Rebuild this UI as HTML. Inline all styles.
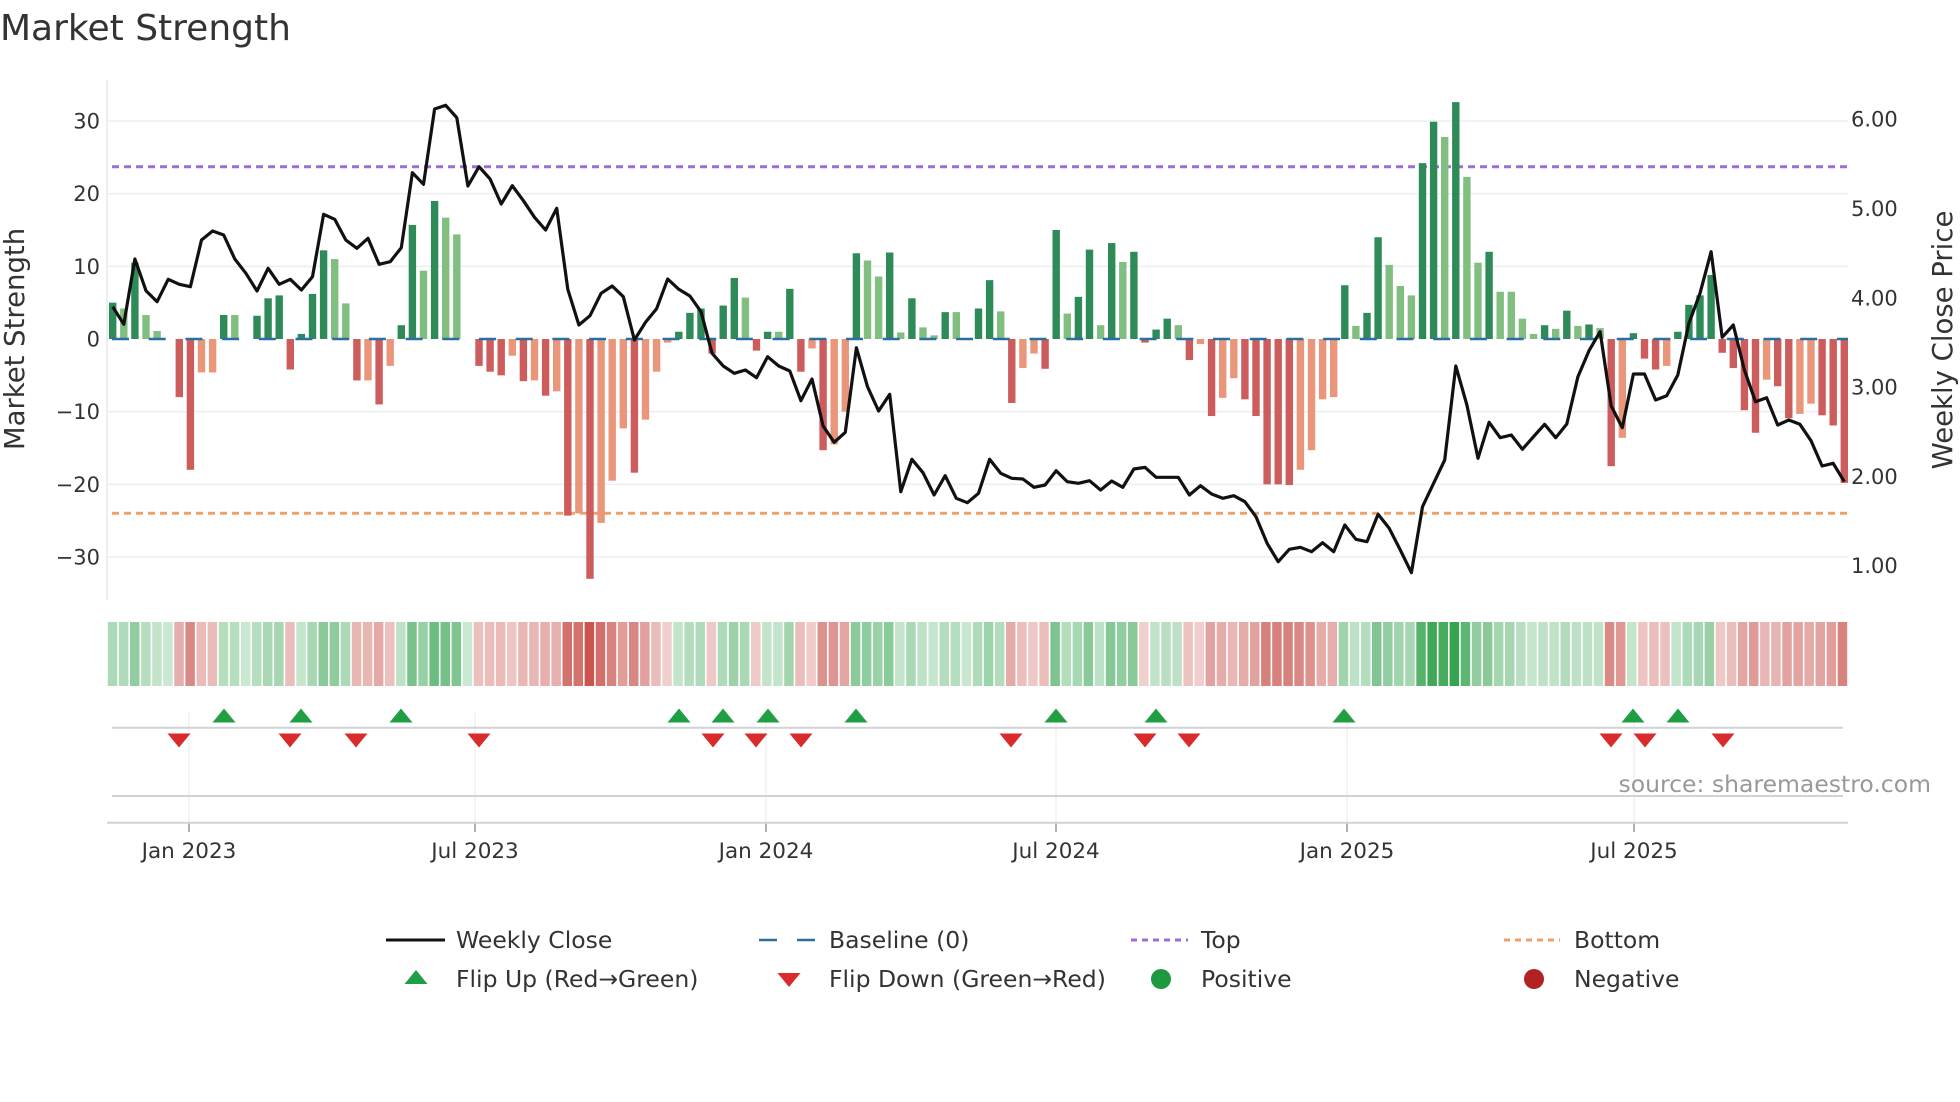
<!DOCTYPE html>
<html><head><meta charset="utf-8">
<style>
html,body{margin:0;padding:0;background:#fff;width:1960px;height:1102px;overflow:hidden}
svg text{font-family:"DejaVu Sans","Liberation Sans",sans-serif;fill:#333}
</style></head>
<body>
<svg id="c" width="1960" height="1102" viewBox="0 0 1960 1102" xmlns="http://www.w3.org/2000/svg"></svg>
<script>
(function(){
var B=[[5,'d'],[4.2,'l'],[10.5,'d'],[3.3,'l'],[1.1,'l'],[0,'l'],[-8,'d'],[-18,'d'],[-4.6,'l'],[-4.6,'l'],[3.3,'d'],[3.3,'l'],[0,'l'],[3.2,'d'],[5.6,'d'],[6,'d'],[-4.2,'d'],[0.7,'d'],[6.2,'d'],[12.2,'d'],[11,'l'],[4.9,'l'],[-5.7,'d'],[-5.7,'l'],[-9,'d'],[-3.7,'l'],[1.9,'d'],[15.7,'d'],[9.4,'l'],[19,'d'],[16.7,'l'],[14.4,'l'],[0,'l'],[-3.7,'d'],[-4.5,'d'],[-5,'d'],[-2.3,'l'],[-5.8,'d'],[-5.7,'l'],[-7.8,'d'],[-7.2,'l'],[-24.3,'d'],[-24,'l'],
[-33,'d'],[-25.3,'l'],[-19.5,'l'],[-12.3,'l'],[-18.4,'d'],[-11.1,'l'],[-4.5,'l'],[-0.5,'l'],[1,'d'],[3.6,'d'],[4.2,'d'],[-2,'d'],[4.6,'d'],[8.4,'d'],[5.7,'l'],[-1.6,'d'],[1,'d'],[1,'l'],[6.9,'d'],[-4.5,'d'],[-1.3,'l'],[-15.3,'d'],[-14.5,'l'],[-10,'l'],[11.8,'d'],[10.8,'l'],[8.6,'l'],[11.9,'d'],[0.9,'l'],[5.6,'d'],[1.6,'l'],[0.5,'l'],[3.7,'d'],[3.7,'l'],[0.1,'l'],[4.2,'d'],[8.1,'d'],[3.8,'l'],[-8.8,'d'],[-4,'l'],[-2,'l'],
[-4.1,'d'],[15,'d'],[3.5,'l'],[5.8,'d'],[12.3,'d'],[1.9,'l'],[13.2,'d'],[10.6,'l'],[12,'d'],[-0.5,'d'],[1.3,'d'],[2.8,'d'],[1.9,'l'],[-2.9,'d'],[-0.7,'l'],[-10.6,'d'],[-8.1,'l'],[-5.4,'l'],[-8.3,'d'],[-10.6,'d'],[-20,'d'],[-20,'d'],[-20.1,'d'],[-18,'l'],[-15.3,'l'],[-8.3,'l'],[-8,'l'],[7.4,'d'],[1.8,'l'],[3.6,'d'],[14,'d'],[10.2,'l'],[7.3,'l'],[6,'l'],[24.2,'d'],[29.9,'d'],[27.8,'l'],[32.6,'d'],[22.3,'l'],[10.5,'l'],[12,'d'],
[6.5,'l'],[6.5,'l'],[2.8,'l'],[0.7,'l'],[1.9,'d'],[1.4,'l'],[3.9,'d'],[1.8,'l'],[2,'d'],[1.5,'l'],[-17.5,'d'],[-13.6,'l'],[0.8,'d'],[-2.7,'d'],[-4.2,'d'],[-3.7,'l'],[1,'d'],[4.7,'d'],[6,'d'],[8.8,'d'],[-1.9,'d'],[-4,'d'],[-9.8,'d'],[-12.9,'d'],[-5.6,'l'],[-6.5,'d'],[-10.9,'d'],[-10.3,'l'],[-8.9,'l'],[-10.5,'d'],[-11.9,'d'],[-19.8,'d']];
var P=[680,733,537,632,665,598,613,620,480,453,465,537,580,633,565,613,598,630,590,403,418,480,505,475,553,545,503,278,313,87,76,113,318,260,297,372,317,362,412,450,385,628,735,
707,640,618,650,780,727,686,597,628,648,695,820,858,880,870,893,830,858,873,962,897,1038,1087,1057,803,920,993,943,1235,1138,1178,1245,1187,1255,1268,1240,1138,1180,1195,1197,1222,
1215,1172,1205,1210,1202,1230,1203,1222,1167,1162,1192,1192,1192,1245,1217,1242,1255,1247,1265,1310,1390,1445,1408,1402,1415,1388,1415,1335,1378,1385,1303,1345,1410,1478,1280,1210,1140,858,975,1135,1027,
1073,1065,1108,1070,1033,1073,1032,890,812,755,978,1043,882,882,960,947,885,730,640,515,772,735,870,965,953,1035,1020,1033,1082,1158,1150,1205];
var N=B.length, x0=112.7, st=(1844.3-112.7)/(N-1);
function X(i){return x0+st*i}
function Y(v){return 339-7.267*v}
var s='';
s+='<text x="0" y="40" font-size="36">Market Strength</text>';
[30,20,10,-10,-20,-30].forEach(function(v){s+='<line x1="107" x2="1848" y1="'+Y(v)+'" y2="'+Y(v)+'" stroke="#eceef1" stroke-width="1.5"/>';});
s+='<line x1="107" x2="107" y1="80" y2="600" stroke="#e6e8eb" stroke-width="1.5"/>';
[30,20,10,0,-10,-20,-30].forEach(function(v){s+='<text x="100" y="'+(Y(v)+7.5)+'" font-size="21" text-anchor="end">'+(v<0?'\u2212'+(-v):v)+'</text>';});
[6,5,4,3,2,1].forEach(function(p){var y=565.7-(p-1)*89.3;s+='<text x="1851" y="'+(y+7.5)+'" font-size="21">'+p.toFixed(2)+'</text>';});
s+='<text transform="translate(24,339) rotate(-90)" font-size="27.5" text-anchor="middle">Market Strength</text>';
s+='<text transform="translate(1952,340) rotate(-90)" font-size="27.5" text-anchor="middle">Weekly Close Price</text>';
s+='<line x1="112" x2="1848" y1="166.7" y2="166.7" stroke="#9b6fd8" stroke-width="3" stroke-dasharray="7,5"/>';
s+='<line x1="112" x2="1848" y1="513.3" y2="513.3" stroke="#eea26a" stroke-width="3" stroke-dasharray="7,5"/>';
var col={dp:'#2e8b57',lp:'#80bf80',dn:'#cd5c5c',ln:'#e9967a'};
for(var i=0;i<N;i++){var v=B[i][0],k=B[i][1];if(Math.abs(v)<0.05)continue;var c=col[k+(v>0?'p':'n')];var y=v>0?Y(v):339;var h=Math.abs(7.267*v);s+='<rect x="'+(X(i)-3.7)+'" y="'+y+'" width="7.4" height="'+h+'" fill="'+c+'"/>';}
s+='<line x1="112" x2="1848" y1="339" y2="339" stroke="#2b6fa0" stroke-width="2.5" stroke-dasharray="17,19.7"/>';
var pts=[];for(var i=0;i<N;i++)pts.push(X(i).toFixed(1)+','+(80+P[i]/3).toFixed(1));
s+='<polyline points="'+pts.join(' ')+'" fill="none" stroke="#111" stroke-width="3.2" stroke-linejoin="round"/>';
function mix(a,b,t){return 'rgb('+[0,1,2].map(function(j){return Math.round(a[j]+(b[j]-a[j])*t)}).join(',')+')';}
var cw=(1848-107)/N;
for(var i=0;i<N;i++){var v=B[i][0];var t=Math.min(1,Math.abs(v)/33);var a=0.25+0.72*Math.pow(t,0.85);var base=v>=0?[44,160,72]:[200,80,74];s+='<rect x="'+(107+cw*i+0.8).toFixed(1)+'" y="622" width="'+(cw-1.6).toFixed(1)+'" height="64" fill="'+mix([255,255,255],base,a)+'"/>';}
var ticks=[[189,'Jan 2023'],[475,'Jul 2023'],[766,'Jan 2024'],[1056,'Jul 2024'],[1347,'Jan 2025'],[1634,'Jul 2025']];
ticks.forEach(function(t){s+='<line x1="'+t[0]+'" x2="'+t[0]+'" y1="712" y2="822" stroke="#eef0f2" stroke-width="1.5"/>';s+='<line x1="'+t[0]+'" x2="'+t[0]+'" y1="822" y2="832" stroke="#999" stroke-width="1.5"/>';s+='<text x="'+t[0]+'" y="858" font-size="21.5" text-anchor="middle">'+t[1]+'</text>';});
s+='<line x1="112" x2="1843" y1="727.7" y2="727.7" stroke="#d0d2d5" stroke-width="2"/>';
s+='<line x1="112" x2="1843" y1="796" y2="796" stroke="#d0d2d5" stroke-width="2"/>';
s+='<line x1="107" x2="1848" y1="822.7" y2="822.7" stroke="#d0d2d5" stroke-width="2"/>';
function up(x,y,c){return '<polygon points="'+(x-11.5)+','+(y+7)+' '+(x+11.5)+','+(y+7)+' '+x+','+(y-7)+'" fill="'+c+'"/>';}
function dn(x,y,c){return '<polygon points="'+(x-11.5)+','+(y-7)+' '+(x+11.5)+','+(y-7)+' '+x+','+(y+7)+'" fill="'+c+'"/>';}
[224,301,401,679,723,768,856,1056,1156,1344,1633,1678].forEach(function(x){s+=up(x,715.5,'#1f9e44');});
[179,290,356,479,713,756,801,1011,1145,1189,1611,1645,1723].forEach(function(x){s+=dn(x,740.5,'#d92b2b');});
s+='<text x="1931" y="792" font-size="23.5" text-anchor="end" style="fill:#999">source: sharemaestro.com</text>';
var r1=940,r2=979,fs=23.5;
s+='<line x1="386" x2="445" y1="'+r1+'" y2="'+r1+'" stroke="#111" stroke-width="3"/>';
s+='<text x="456" y="'+(r1+8)+'" font-size="'+fs+'">Weekly Close</text>';
s+='<line x1="759" x2="815" y1="'+r1+'" y2="'+r1+'" stroke="#2b6fa0" stroke-width="2.5" stroke-dasharray="18,20"/>';
s+='<text x="829" y="'+(r1+8)+'" font-size="'+fs+'">Baseline (0)</text>';
s+='<line x1="1131" x2="1188" y1="'+r1+'" y2="'+r1+'" stroke="#9b6fd8" stroke-width="3" stroke-dasharray="6,5"/>';
s+='<text x="1201" y="'+(r1+8)+'" font-size="'+fs+'">Top</text>';
s+='<line x1="1504" x2="1560" y1="'+r1+'" y2="'+r1+'" stroke="#eea26a" stroke-width="3" stroke-dasharray="6,5"/>';
s+='<text x="1574" y="'+(r1+8)+'" font-size="'+fs+'">Bottom</text>';
s+=up(416,r2-2,'#1f9e44');
s+='<text x="456" y="'+(r2+8)+'" font-size="'+fs+'">Flip Up (Red\u2192Green)</text>';
s+=dn(789,r2+1,'#d92b2b');
s+='<text x="829" y="'+(r2+8)+'" font-size="'+fs+'">Flip Down (Green\u2192Red)</text>';
s+='<circle cx="1161" cy="'+r2+'" r="10" fill="#1e9a3e"/>';
s+='<text x="1201" y="'+(r2+8)+'" font-size="'+fs+'">Positive</text>';
s+='<circle cx="1534" cy="'+r2+'" r="10" fill="#b22222"/>';
s+='<text x="1574" y="'+(r2+8)+'" font-size="'+fs+'">Negative</text>';
document.getElementById('c').innerHTML=s;
})();
</script>
</body></html>
